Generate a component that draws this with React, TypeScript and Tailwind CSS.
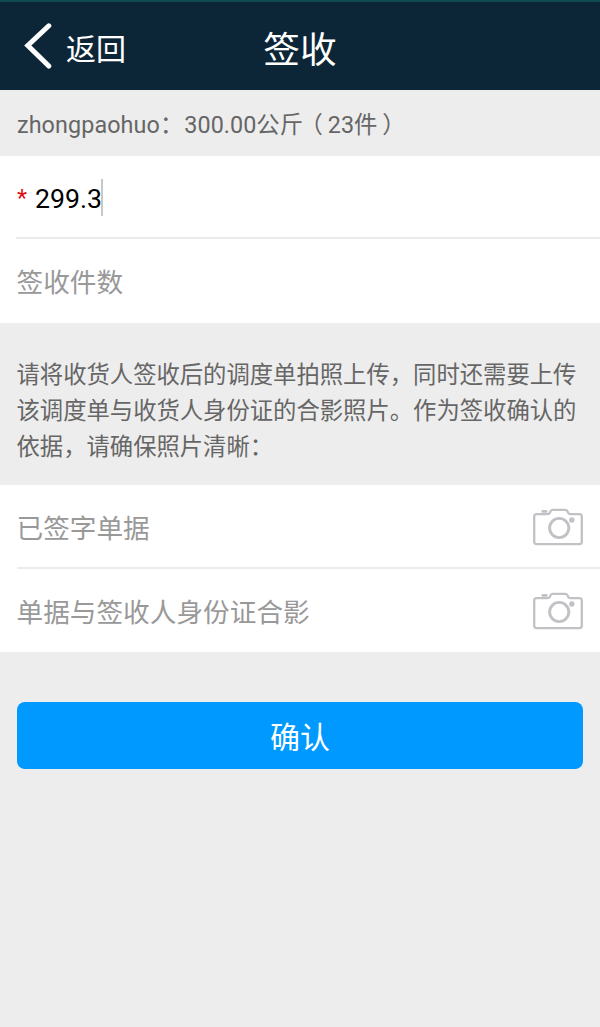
function CameraIcon() {
  return (
    <svg className="h-[38px] w-[50px] shrink-0" viewBox="0 0 50 38" fill="none" stroke="#c1c2c6" strokeWidth="2.3">
      <path d="M3.7 6.2H14.5Q16.3 6.2 17 4.5L17.8 2.8Q18.4 1.8 19.7 1.8H32.3Q33.6 1.8 34.2 2.8L35 4.5Q35.7 6.2 37.5 6.2H46.3Q48.8 6.2 48.8 8.7V33.5Q48.8 36.2 46.3 36.2H3.7Q1.2 36.2 1.2 33.5V8.7Q1.2 6.2 3.7 6.2Z" />
      <path d="M9.7 3.4H13.3" strokeWidth="2.6" strokeLinecap="round" />
      <circle cx="26.2" cy="20" r="9.6" strokeWidth="2.9" />
      <circle cx="38.8" cy="12" r="2.7" fill="#c1c2c6" stroke="none" />
    </svg>
  );
}

export default function App() {
  return (
    <div className="flex h-[1027px] w-[600px] flex-col overflow-hidden bg-[#ededed] font-['Roboto','Noto_Sans_CJK_SC',sans-serif] text-[#666]">
      <header className="grid h-[90px] grid-cols-3 items-center border-t-2 border-[#0f4a50] bg-[#0d2637] text-white">
        <button className="flex items-center pl-6 text-left">
          <svg className="h-[48px] w-[28px]" viewBox="0 0 28 48" fill="none" stroke="white" strokeWidth="5" strokeLinecap="round">
            <path d="M24.8 3.8L3.8 23.5L24.8 44" />
          </svg>
          <span className="ml-[14px] pt-[8px] text-[30px] leading-10">返回</span>
        </button>
        <h1 className="pt-[10px] text-center text-[36.67px] leading-[50px]">签收</h1>
      </header>

      <section className="flex h-[66px] items-center pl-[17px] pt-[3px] text-[23.33px] leading-8">
        <p className="flex">
          <span className="tracking-[0.1px]">zhongpaohuo：</span>
          <span className="ml-[1px] tracking-[0.05px]">300.00公斤</span>
          <span className="ml-[8px] mr-[5px] [font-feature-settings:'halt']">（</span>
          <span>23件</span>
          <span className="ml-[5px] [font-feature-settings:'halt']">）</span>
        </p>
      </section>

      <section className="h-[167px] bg-white pl-4 text-[26.67px] leading-9">
        <div className="flex h-[83px] items-center border-b-2 border-[#ebebeb]">
          <span className="w-[18px] pl-px pt-[2px] text-[23.33px] text-[#dd1018]">*</span>
          <span className="ml-px pt-1 text-black">299.3</span>
          <span className="-ml-px mt-[2px] h-[37px] w-[2px] bg-[#c8c8c8]" />
        </div>
        <div className="flex h-[84px] items-center pl-[0.5px] pt-[3px] text-[#999]">签收件数</div>
      </section>

      <section className="h-[162px] pl-[16.5px] pt-[34px] text-[23.33px] leading-[36px]">
        <p>
          请将收货人签收后的调度单拍照上传，同时还需要上传
          <br />
          该调度单与收货人身份证的合影照片。作为签收确认的
          <br />
          依据，请确保照片清晰：
        </p>
      </section>

      <section className="h-[167px] bg-white pl-[16.5px] text-[26.67px] leading-9 text-[#999]">
        <div className="flex h-[84px] items-center justify-between border-b-2 border-[#ebebeb] pr-[17px] pt-[2px]">
          <span className="pt-[4px]">已签字单据</span>
          <CameraIcon />
        </div>
        <div className="flex h-[83px] items-center justify-between pr-[17px] pt-px">
          <span className="pt-[3px]">单据与签收人身份证合影</span>
          <CameraIcon />
        </div>
      </section>

      <div className="px-[17px] pt-[50px]">
        <button className="h-[67px] w-full rounded-[8px] bg-[#0099ff] pt-[5px] text-[30px] leading-10 text-white">确认</button>
      </div>
    </div>
  );
}
